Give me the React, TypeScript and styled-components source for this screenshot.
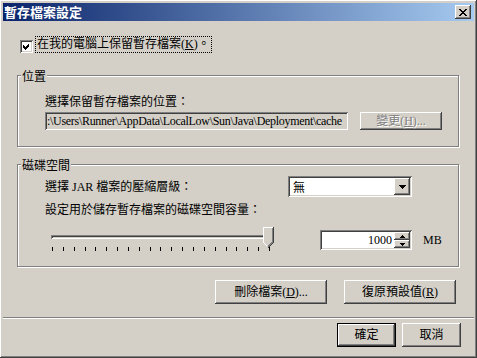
import React from 'react';
import styled, { createGlobalStyle } from 'styled-components';

const face = '#d4d0c8';

const GlobalStyle = createGlobalStyle`
  * { box-sizing: border-box; }
  html, body { margin: 0; padding: 0; background: ${face}; }
  body {
    font-family: "Liberation Serif", "Noto Sans CJK TC", serif;
    font-size: 12px;
    color: #000;
  }
`;

const raised = `
  box-shadow: inset -1px -1px #404040, inset 1px 1px #ffffff,
    inset -2px -2px #808080, inset 2px 2px ${face};
`;

const sunken = `
  box-shadow: inset 1px 1px #808080, inset -1px -1px #ffffff,
    inset 2px 2px #404040, inset -2px -2px ${face};
`;

const Window = styled.div`
  width: 477px;
  height: 358px;
  padding: 3px;
  background: ${face};
  display: flex;
  flex-direction: column;
  ${raised}
`;

const TitleBar = styled.div`
  height: 18px;
  flex-shrink: 0;
  display: flex;
  align-items: center;
  justify-content: space-between;
  padding: 0 3px 0 1px;
  background: linear-gradient(to right, #0a246a, #a6caf0);
`;

const Title = styled.span`
  color: #fff;
  font-family: "Noto Sans CJK TC", sans-serif;
  font-weight: 700;
  font-size: 13px;
  line-height: 18px;
`;

const CloseButton = styled.button`
  width: 16px;
  height: 14px;
  padding: 0;
  border: 0;
  background: ${face};
  display: flex;
  align-items: center;
  justify-content: center;
  ${raised}
`;

const Content = styled.div`
  display: flex;
  flex-direction: column;
  padding: 0 15px 0 14px;
`;

const CheckRow = styled.div`
  display: flex;
  align-items: flex-end;
  height: 17px;
  margin: 15px 0 0 3px;
`;

const CheckBox = styled.span`
  display: block;
  width: 13px;
  height: 13px;
  background: #fff;
  ${sunken}
`;

const FocusLabel = styled.span`
  margin-left: 2px;
  height: 17px;
  padding: 0 1px;
  border: 1px dotted #000;
  line-height: 15px;
  white-space: nowrap;
`;

const Group = styled.fieldset<{ $top: number }>`
  margin: ${(p) => p.$top}px 0 0 0;
  padding: 0;
  min-width: 0;
  border: 1px solid #808080;
  box-shadow: inset 1px 1px #ffffff, 1px 1px #ffffff;
`;

const Legend = styled.legend`
  margin-left: 3px;
  padding: 4px 1px 0;
  line-height: 12px;
  background: ${face};
  font-size: 12px;
`;

const GroupBody = styled.div<{ $pad: string }>`
  padding: ${(p) => p.$pad};
`;

const Label = styled.div<{ $w?: number; $top?: number }>`
  line-height: 14px;
  white-space: nowrap;
  flex-shrink: 0;
  width: ${(p) => (p.$w ? `${p.$w}px` : 'auto')};
  margin-top: ${(p) => p.$top || 0}px;
`;

const Row = styled.div<{ $top?: number; $align?: string }>`
  display: flex;
  align-items: ${(p) => p.$align || 'center'};
  margin-top: ${(p) => p.$top || 0}px;
`;

const PathField = styled.div`
  width: 303px;
  height: 18px;
  padding: 0 2px 0 2px;
  display: flex;
  align-items: center;
  overflow: hidden;
  background: ${face};
  ${sunken}
  span {
    flex-shrink: 0;
    white-space: nowrap;
    line-height: 14px;
    letter-spacing: -0.3px;
  }
`;

const Button = styled.button<{ $w: number; $h: number; $default?: boolean; $off?: boolean; $left?: number }>`
  width: ${(p) => p.$w}px;
  height: ${(p) => p.$h}px;
  margin-left: ${(p) => p.$left || 0}px;
  padding: 0;
  border: 0;
  background: ${face};
  font-family: "Liberation Serif", "Noto Sans CJK TC", serif;
  font-size: 12px;
  line-height: 14px;
  white-space: nowrap;
  color: ${(p) => (p.$off ? '#808080' : '#000')};
  text-shadow: ${(p) => (p.$off ? '1px 1px #ffffff' : 'none')};
  ${(p) =>
    p.$default
      ? `box-shadow: inset 0 0 0 1px #000, inset -2px -2px #404040, inset 2px 2px #ffffff, inset -3px -3px #808080;`
      : raised}
`;

const Combo = styled.div`
  width: 124px;
  height: 21px;
  padding: 2px;
  display: flex;
  align-items: center;
  background: #fff;
  ${sunken}
`;

const ComboText = styled.span`
  flex: 1;
  padding-left: 3px;
  line-height: 14px;
  font-family: "Noto Sans CJK TC", sans-serif;
`;

const DropButton = styled.span`
  width: 16px;
  height: 17px;
  display: flex;
  align-items: center;
  justify-content: center;
  background: ${face};
  ${raised}
`;

const SliderBox = styled.div`
  position: relative;
  width: 232px;
  height: 25px;
  padding-top: 8px;
  flex-shrink: 0;
`;

const Track = styled.div`
  margin-left: 6px;
  width: 223px;
  height: 4px;
  background: ${face};
  box-shadow: inset 1px 1px #808080, inset -1px -1px #ffffff, inset 2px 2px #404040;
`;

const Ticks = styled.div`
  margin: 8px 0 0 7px;
  width: 218px;
  display: flex;
  justify-content: space-between;
`;

const Tick = styled.span`
  width: 1px;
  height: 4px;
  background: #000;
`;

const Thumb = styled.svg`
  position: absolute;
  left: 218px;
  top: 0;
`;

const Spinner = styled.div`
  width: 92px;
  height: 20px;
  margin: 3px 0 0 43px;
  padding: 2px;
  display: flex;
  background: #fff;
  ${sunken}
`;

const SpinText = styled.span`
  flex: 1;
  text-align: right;
  padding-right: 2px;
  line-height: 16px;
`;

const SpinButtons = styled.div`
  width: 16px;
  display: flex;
  flex-direction: column;
`;

const SpinButton = styled.span`
  flex: 1;
  display: flex;
  align-items: center;
  justify-content: center;
  background: ${face};
  ${raised}
`;

const Unit = styled.span`
  margin: 3px 0 0 11px;
  line-height: 20px;
`;

const ButtonRow = styled.div`
  display: flex;
  justify-content: flex-end;
  gap: 17px;
  margin-top: 13px;
  padding-right: 3px;
`;

const Separator = styled.div`
  margin-top: 13px;
  height: 2px;
  border-top: 1px solid #808080;
  border-bottom: 1px solid #ffffff;
`;

const Footer = styled.div`
  display: flex;
  justify-content: flex-end;
  gap: 6px;
  padding: 4px 13px 0 0;
`;

const closeGlyph = [
  [0, 0, 2], [6, 0, 2],
  [1, 1, 2], [5, 1, 2],
  [2, 2, 4],
  [3, 3, 2],
  [2, 4, 4],
  [1, 5, 2], [5, 5, 2],
  [0, 6, 2], [6, 6, 2],
];

const Arrow = ({ w, down = true }: { w: number; down?: boolean }) => {
  const rows = Math.ceil(w / 2);
  return (
    <svg width={w} height={rows} shapeRendering="crispEdges">
      {Array.from({ length: rows }).map((_, i) => {
        const y = down ? i : rows - 1 - i;
        return <rect key={i} x={i} y={y} width={w - i * 2} height={1} fill="#000" />;
      })}
    </svg>
  );
};

const tickCount = 21;

export default function App() {
  return (
    <>
      <GlobalStyle />
      <Window>
        <TitleBar>
          <Title>暫存檔案設定</Title>
          <CloseButton aria-label="close">
            <svg width="8" height="7" shapeRendering="crispEdges">
              {closeGlyph.map(([x, y, w], i) => (
                <rect key={i} x={x} y={y} width={w} height={1} fill="#000" />
              ))}
            </svg>
          </CloseButton>
        </TitleBar>

        <Content>
          <CheckRow>
            <CheckBox>
              <svg width="13" height="13" shapeRendering="crispEdges">
                <polygon points="3,5 5,7 9,3 9,6 5,10 3,8" fill="#000" />
              </svg>
            </CheckBox>
            <FocusLabel>
              在我的電腦上保留暫存檔案(<u>K</u>)。
            </FocusLabel>
          </CheckRow>

          <Group $top={14}>
            <Legend>位置</Legend>
            <GroupBody $pad="12px 16px 16px 27px">
              <Label>選擇保留暫存檔案的位置：</Label>
              <Row $top={3}>
                <PathField>
                  <span>:\Users\Runner\AppData\LocalLow\Sun\Java\Deployment\cache</span>
                </PathField>
                <Button $w={82} $h={18} $off $left={12}>
                  變更(<u>H</u>)...
                </Button>
              </Row>
            </GroupBody>
          </Group>

          <Group $top={9}>
            <Legend>磁碟空間</Legend>
            <GroupBody $pad="4px 16px 14px 27px">
              <Row>
                <Label $w={243}>選擇 JAR 檔案的壓縮層級：</Label>
                <Combo>
                  <ComboText>無</ComboText>
                  <DropButton>
                    <Arrow w={7} />
                  </DropButton>
                </Combo>
              </Row>
              <Label $top={6}>設定用於儲存暫存檔案的磁碟空間容量：</Label>
              <Row $top={10} $align="flex-start">
                <SliderBox>
                  <Track />
                  <Ticks>
                    {Array.from({ length: tickCount }).map((_, i) => (
                      <Tick key={i} />
                    ))}
                  </Ticks>
                  <Thumb width="11" height="21" shapeRendering="crispEdges">
                    <polygon points="0,0 10,0 10,15 5,20 0,15" fill={face} />
                    <polyline points="0.5,15 0.5,0.5 10,0.5" fill="none" stroke="#fff" />
                    <polyline points="10.5,0 10.5,15.5 5.5,20.5 4.5,20.5" fill="none" stroke="#404040" />
                    <polyline points="9.5,1 9.5,15 5,19.5" fill="none" stroke="#808080" />
                    <polyline points="0.5,15.5 4.5,19.5" fill="none" stroke="#fff" />
                  </Thumb>
                </SliderBox>
                <Spinner>
                  <SpinText>1000</SpinText>
                  <SpinButtons>
                    <SpinButton>
                      <Arrow w={5} down={false} />
                    </SpinButton>
                    <SpinButton>
                      <Arrow w={5} />
                    </SpinButton>
                  </SpinButtons>
                </Spinner>
                <Unit>MB</Unit>
              </Row>
            </GroupBody>
          </Group>

          <ButtonRow>
            <Button $w={112} $h={24}>
              刪除檔案(<u>D</u>)...
            </Button>
            <Button $w={112} $h={24}>
              復原預設值(<u>R</u>)
            </Button>
          </ButtonRow>
        </Content>

        <Separator />

        <Footer>
          <Button $w={59} $h={24} $default>
            確定
          </Button>
          <Button $w={59} $h={24}>
            取消
          </Button>
        </Footer>
      </Window>
    </>
  );
}
